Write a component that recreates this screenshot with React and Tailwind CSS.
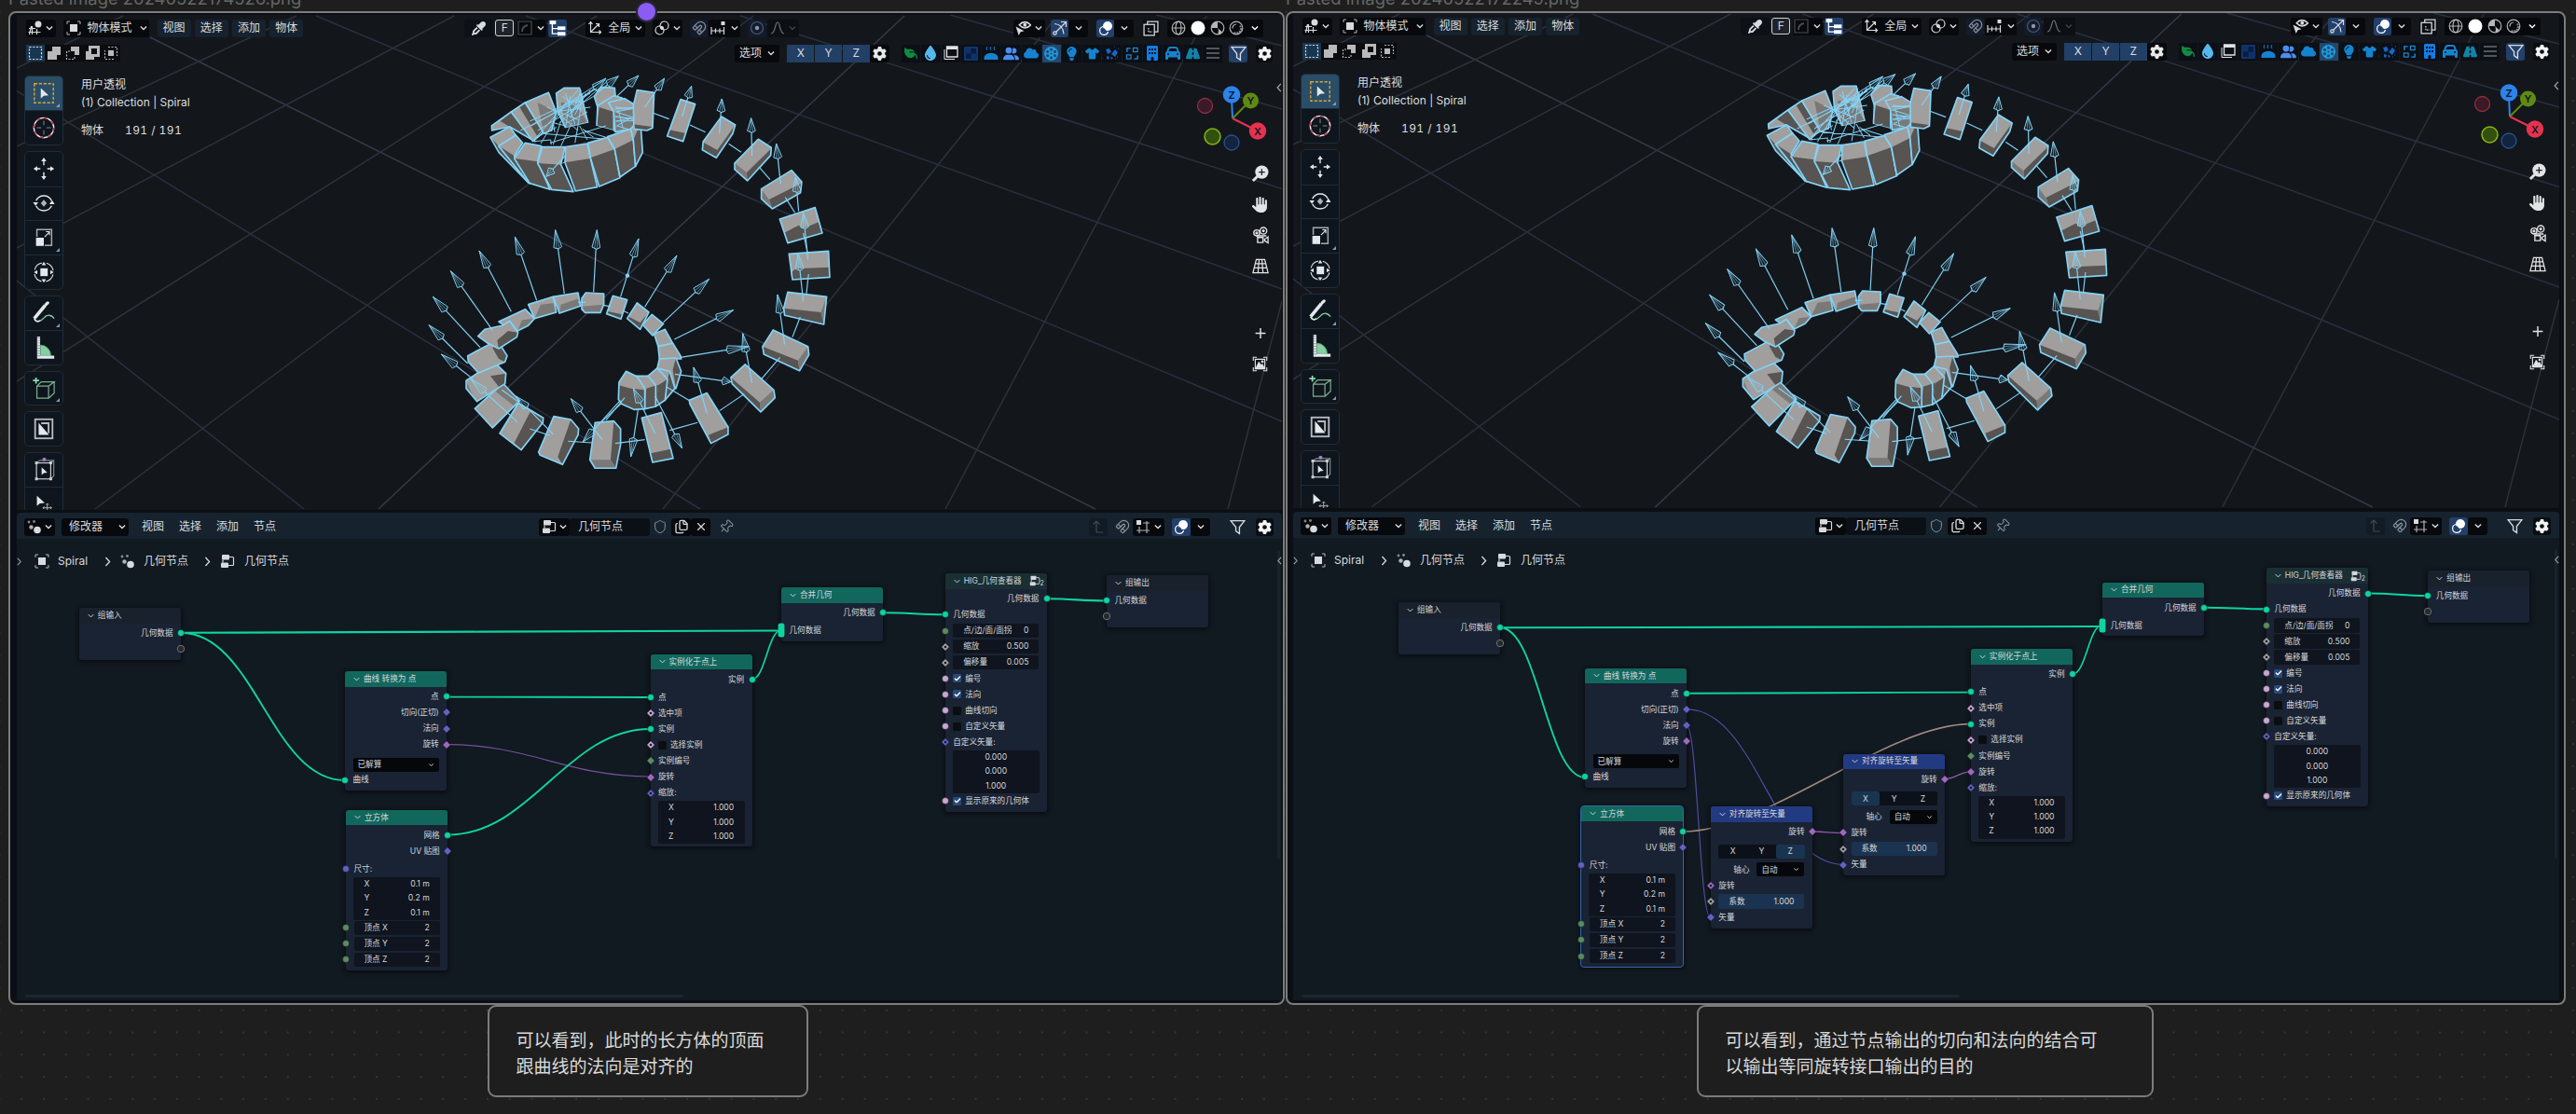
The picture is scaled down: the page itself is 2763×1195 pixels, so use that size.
import React from "react";
import { Magnet, Shield, X, Pin, Files, Check } from "lucide-react";
import {
  FaLeaf, FaDroplet, FaLightbulb, FaShirt, FaCar, FaRoad, FaBuilding,
  FaGear, FaHand, FaCloud, FaUserGroup, FaEyeDropper,
} from "react-icons/fa6";

/* ---------- small icons, drawn on a 16 unit grid ---------- */
function Ico({ children, className = "size-4" }) {
  return (
    <svg viewBox="0 0 16 16" fill="none" stroke="currentColor" strokeWidth="1.2" className={"shrink-0 " + className}>
      {children}
    </svg>
  );
}
const Chev = ({ className = "size-2.5", sw = 2.2 }) => (
  <Ico className={className}><path d="M3 5.5l5 5 5-5" strokeWidth={sw} /></Ico>
);
const ChevRight = ({ className = "size-2.5" }) => (
  <Ico className={className}><path d="M5 1.5l6 6.500-6 6.500" strokeWidth="1.900" /></Ico>
);
const ChevLeft = ({ className = "size-2.5" }) => (
  <Ico className={className}><path d="M11 1.5l-6 6.500 6 6.500" strokeWidth="1.900" /></Ico>
);
const ViewportType = () => (
  <Ico><path d="M4.500 6v9M9.500 9v6M1 8.500h7M0.500 12.500h13M1.500 15l2-9" /><circle cx="11" cy="4" r="3.500" fill="currentColor" stroke="none" /></Ico>
);
const ObjectMode = () => (
  <Ico><rect x="4" y="4" width="8" height="8" fill="currentColor" stroke="none" /><path d="M1 4V1h3M12 1h3v3M15 12v3h-3M4 15H1v-3" strokeWidth="1" opacity=".8" /></Ico>
);
const Particles = () => (
  <Ico><circle cx="11" cy="11.500" r="3.800" fill="currentColor" stroke="none" /><circle cx="4.500" cy="8.500" r="2.200" fill="currentColor" stroke="none" opacity=".8" /><circle cx="2" cy="3" r="1.400" fill="currentColor" stroke="none" opacity=".6" /><circle cx="7.500" cy="2.500" r="1.400" fill="currentColor" stroke="none" opacity=".6" /></Ico>
);
const NodeTree = ({ className = "size-4" }) => (
  <Ico className={className}><rect x="2" y="1" width="8" height="5.500" rx="1" fill="currentColor" stroke="none" /><rect x="1" y="9.500" width="8" height="5.500" rx="1" fill="currentColor" stroke="none" /><path d="M10 3.500h3.500q1 0 1 1v7q0 1-1 1H9M3 6.500v3" /></Ico>
);
const Axes = () => (
  <Ico><path d="M3.500 2v10.500H14M3.500 12.500L12 4M1.500 4l2-2.500 2 2.500M12.500 10.500l2 2-2 2M9 3.500h3.500V7" /></Ico>
);
const LinkPivot = () => (
  <Ico><circle cx="5.500" cy="10.500" r="4.500" /><circle cx="10.500" cy="5.500" r="4.500" /><circle cx="8" cy="8" r="1.300" fill="currentColor" /></Ico>
);
const SnapInc = () => (
  <Ico className="h-4 w-[16px]"><path d="M1 7v8M5.500 8.500v5M10 8.500v5M14.500 7v8M1 11h13.500" /><rect x="11.500" y="1" width="4" height="4" fill="currentColor" stroke="none" /></Ico>
);
const SnapGrid = () => (
  <Ico><rect x="1" y="1" width="5" height="5" fill="currentColor" stroke="none" /><path d="M4 8v7M12 2v13M8 4h7M1 12h14" opacity=".8" /></Ico>
);
const Dot = () => (
  <Ico><circle cx="8" cy="8" r="6.500" opacity=".5" /><circle cx="8" cy="8" r="2.200" fill="currentColor" stroke="none" /></Ico>
);
const Falloff = () => <Ico><path d="M1 14C6 14 5 2 8 2s2 12 7 12" /></Ico>;
const TreeList = () => (
  <Ico className="size-[18px]"><path d="M3 4v9.500h5M3 8.500h5" /><rect x="0.500" y="1" width="6" height="3.500" fill="currentColor" stroke="none" /><rect x="8" y="6.500" width="7.500" height="3.500" fill="currentColor" stroke="none" /><rect x="8" y="11.800" width="7.500" height="3.500" fill="currentColor" stroke="none" /></Ico>
);
const EyeCursor = () => (
  <Ico className="size-[17px]"><path d="M4 4.500Q9.500-1.500 15.500 4.500 9.500 10.500 4 4.500z" strokeWidth="1.500" /><circle cx="9.700" cy="4.500" r="1.800" fill="currentColor" stroke="none" /><path d="M0.500 6l8.500 4.500-3.700 1L3.500 15z" fill="currentColor" stroke="none" /></Ico>
);
const GizmoIcon = () => (
  <Ico><path d="M2.500 13.500L14 2M9 1.500h5.500V7M2 3.500Q11 4 12 14.500" /><circle cx="2.500" cy="13.500" r="1.700" fill="#22406b" /></Ico>
);
const OverlayIcon = () => (
  <Ico><circle cx="10" cy="6" r="5" fill="currentColor" stroke="none" /><path d="M5 6.500A4.500 4.500 0 1 0 10.500 12" /><path d="M6 8.500A3 3 0 0 0 8 10.500" stroke="#22406b" /></Ico>
);
const XrayIcon = () => (
  <Ico className="size-[17px]"><rect x="1" y="4" width="10.500" height="11" /><path d="M4.500 4V1H15v10.500h-3.500" /><path d="M5.500 7.500v4h4" strokeDasharray="1.500 1" /></Ico>
);
const WireIcon = () => <Ico><circle cx="8" cy="8" r="6.800" /><ellipse cx="8" cy="8" rx="3" ry="6.800" /><path d="M1.200 8h13.600" /></Ico>;
const SolidIcon = () => <Ico><circle cx="8" cy="8" r="7.500" fill="#fff" stroke="none" /></Ico>;
const MatIcon = () => <Ico><circle cx="8" cy="8" r="6.800" /><path d="M8 1.200V8L13 12.500A6.800 6.800 0 0 1 8 14.800 7 7 0 0 0 8 8H1.200A6.800 6.800 0 0 1 8 1.200z" fill="currentColor" stroke="none" /></Ico>;
const RendIcon = () => <Ico><circle cx="8" cy="8" r="6.800" /><path d="M12 5.500A5 5 0 0 1 5 12.500" strokeWidth="2" strokeDasharray="2 .8" opacity=".7" /><path d="M4 8.500A4 4 0 0 1 8 4" /></Ico>;
const FilterIcon = () => <Ico className="size-[17px]"><path d="M1 1.500h14L9.800 8v6.500L6.200 12V8z" strokeWidth="1.300" /></Ico>;
const MenuIcon = () => <Ico className="size-4 text-[#9a9da1]"><path d="M1 3h14M1 8h14M1 13h14" strokeWidth="1.200" /></Ico>;
const UpArrow = () => <Ico><path d="M6 14V2M2.500 5.500L6 2l3.500 3.500M6 14h7" /></Ico>;

/* asset filters */
const WindowIcon = () => <Ico className="size-4 text-[#e3e3e3]"><path d="M3.500 1h11.500v11H3.500z" strokeWidth="1.300" /><path d="M3.500 2.500H15" strokeWidth="3" /><path d="M1 4v10.500h11" strokeWidth="1" /></Ico>;
const CheckerIcon = () => <Ico className="size-[15px] text-[#1450a0]"><rect x="1" y="1" width="14" height="14" fill="#0b1c3d" /><rect x="1.500" y="1.500" width="6.500" height="6.500" fill="#0d3168" stroke="none" /><rect x="8" y="8" width="6.500" height="6.500" fill="#0d3168" stroke="none" /></Ico>;
const BowlIcon = () => <Ico className="size-4 text-[#1583cf]"><path d="M.500 15v-2A7 5 0 0 1 15.500 13v2z" fill="currentColor" stroke="none" /><path d="M4 1l-1 2 1 2M8 1L7 3l1 2M12 1l-1 2 1 2" strokeWidth="1" /></Ico>;
const ReelIcon = () => (
  <Ico className="size-[17px] text-[#1e9be0]"><circle cx="8" cy="8" r="7" fill="currentColor" stroke="none" />
    {[[8, 3.800], [8, 12.200], [4.300, 6], [11.700, 6], [4.300, 10], [11.700, 10]].map(([x, y], i) => <circle key={i} cx={x} cy={y} r="1.500" fill="#234a70" stroke="none" />)}
    <circle cx="8" cy="8" r="1" fill="#234a70" stroke="none" /></Ico>
);
const ShardIcon = () => <Ico className="size-4 text-[#1866c4]"><path d="M1 4l4-1 2 4-4 2zM7 9l4-5 3 3-3 5zM2 11l3 1-1 3-2-1zM6 12l3 1-2 2z" fill="currentColor" stroke="none" /><path d="M10 1h1M14 3h1M13 12h1M11 14h1" strokeWidth="1.500" opacity=".6" /></Ico>;
const SwapIcon = () => <Ico className="size-[15px] text-[#1d92d8]"><rect x="9" y="1.500" width="5" height="4.500" /><rect x="1.500" y="9.500" width="5" height="4.500" /><path d="M6 2H2v4M10 14h4v-4" strokeWidth="1.500" /></Ico>;

const ASSETS = [
  <FaLeaf className="size-3.5 -scale-x-100 text-[#128a41]" />,
  <FaDroplet className="size-4 text-[#57b7ec]" />,
  <WindowIcon />,
  <CheckerIcon />,
  <BowlIcon />,
  <FaUserGroup className="size-[17px] text-[#4c8df0]" />,
  <FaCloud className="size-4 text-[#1583cf]" />,
  <ReelIcon />,
  <FaLightbulb className="size-[15px] text-[#1583cf]" />,
  <FaShirt className="size-[15px] text-[#1583cf]" />,
  <ShardIcon />,
  <SwapIcon />,
  <FaBuilding className="size-4 text-[#127ce6]" />,
  <FaCar className="size-4 text-[#1583cf]" />,
  <FaRoad className="size-[15px] text-[#1283a8]" />,
  <MenuIcon />,
];

/* ---------- toolbar tools ---------- */
const W = "#e4e8ec";
const TOOLS = [
  [
    <g><rect x="3" y="3" width="22" height="22" stroke="#d9a53a" strokeWidth="1.500" strokeDasharray="3.500 1.800" /><path d="M10.500 8v12l3.500-3 5.500-.5z" fill={W} stroke="none" /></g>,
    <g><circle cx="14" cy="14" r="11.500" stroke={W} strokeWidth="1.500" /><circle cx="14" cy="14" r="11.500" stroke="#c7364f" strokeWidth="1.500" strokeDasharray="4.500 4.500" /><path d="M14 6v5M14 17v5M6 14h5M17 14h5" stroke="#8b9095" /></g>,
  ],
  [
    <g fill={W} stroke={W}><path d="M14 1l3 4.500h-6zM14 27l3-4.500h-6zM2 14l4.500-3v6zM26 14l-4.500-3v6z" stroke="none" /><path d="M14 5v5M14 18v5M6 14h4M18 14h5" strokeWidth="1.500" /></g>,
    <g stroke={W} strokeWidth="1.500"><path d="M5 11a10 10 0 0 1 18 0M5 17a10 10 0 0 0 18 0" /><path d="M1.500 13h6L4.500 17zM20.500 15h6l-3-4.500z" fill={W} stroke="none" /><path d="M14 10l3.500 4-3.500 4-3.500-4z" fill="#aeb4b9" stroke="none" /></g>,
    <g stroke={W} strokeWidth="1.200"><path d="M6 13V4.500h17V23h-8" stroke="#a4abb2" strokeWidth="1.600" /><rect x="5" y="14" width="9" height="9.500" fill={W} stroke="none" /><path d="M15 13l5.500-5.500M16.500 7h4v4" /></g>,
    <g stroke={W}><circle cx="14" cy="14" r="11" strokeWidth="1.200" strokeDasharray="12 5.280" strokeDashoffset="-2.700" /><rect x="10" y="9.500" width="8.500" height="9" fill={W} stroke="none" /><path d="M14 2l2.500 4h-5zM14 26l2.500-4h-5zM2.500 14l4-2.500v5zM25.500 14l-4-2.500v5z" fill={W} stroke="none" /></g>,
  ],
  [
    <g><path d="M3 20L15.500 5" stroke={W} strokeWidth="4" /><path d="M16.500 4l2-2" stroke={W} strokeWidth="3.500" strokeLinecap="round" /><path d="M3 20c2 6 8 3 11-.5 4-5 9-3.500 12 .5" stroke="#7fcf9f" strokeWidth="1.500" /><path d="M3 20c1 4 4 4 7 2.500" stroke={W} strokeWidth="1.500" /></g>,
    <g><path d="M10 23V11a12 12 0 0 1 12 12z" fill="#86cfa3" stroke="#5fa57c" /><path d="M8 1v24h18" stroke={W} strokeWidth="3.500" /><path d="M8 2v22" stroke="#8d9298" strokeWidth="3.500" strokeDasharray="1 2" /></g>,
  ],
  [
    <g stroke="#7dae92" strokeWidth="1.300"><path d="M6 11h13.500v14H6zM6 11l5-5h15l-6.500 5M26 6v13l-6.500 6" /><path d="M5 1v7M1.500 4.500h7" stroke="#8be0b0" strokeWidth="1.800" /></g>,
  ],
  [
    <g><rect x="4" y="3" width="20" height="22" stroke="#b5babf" strokeWidth="2" /><path d="M8 7v14h12z" fill={W} stroke="none" /><path d="M11 7.500h8.500V19" stroke="#b5babf" strokeWidth="2" /></g>,
  ],
  [
    <g stroke="#c7ccd1" strokeWidth="1.300"><rect x="5.500" y="6" width="16.500" height="18.500" /><path d="M5.500 6l4-3h16v18l-3.500 3.500M25.500 3L22 6" stroke="#7f858b" /><circle cx="14.500" cy="2" r="2.200" fill="#a07fc4" stroke="none" /><path d="M11.500 11v9l2.500-2.300 4-.4z" fill={W} stroke="none" /><path d="M4.500 5h2v2h-2zM21 5h2v2h-2zM4.500 23.500h2v2h-2zM21 23.500h2v2h-2z" fill={W} /></g>,
    <g stroke="#b9bec3"><path d="M6 4v12l3.500-3 5.500-.5z" fill={W} stroke="none" /><path d="M18 13v10M13 18h10M16.500 14.500L18 13l1.500 1.500M14.500 16.500L13 18l1.500 1.500M21.500 16.500L23 18l-1.500 1.500" /></g>,
  ],
];
const CORNERS = { "0-0": 1, "1-2": 1, "2-0": 1, "3-0": 1 };

function Toolbar() {
  return (
    <div className="flex w-[42px] flex-col gap-[6px]">
      {TOOLS.map((group, gi) => (
        <div key={gi} className="flex flex-col overflow-hidden rounded-[5px] border border-[#1e2c39] bg-[#0e151d]">
          {group.map((g, i) => (
            <div key={i} className={"relative flex items-center justify-center " + (group.length === 1 ? "h-[35.300px] " : "h-[36.700px] ") + (gi === 0 && i === 0 ? "bg-[#2a4d68]" : i > 0 ? "border-t border-[#1e2c39]" : "")}>
              <svg viewBox="0 0 28 28" fill="none" className="size-[26px]">{g}</svg>
              {CORNERS[gi + "-" + i] && <span className="absolute right-[3px] bottom-[3px] border-2 border-t-transparent border-r-[#8b98a3] border-b-[#8b98a3] border-l-transparent" />}
            </div>
          ))}
        </div>
      ))}
    </div>
  );
}

/* ---------- 3D scene ---------- */
const GRID = [
  [161, 40, 1175, 546, 1], [18, 97.600, 751, 546], [18, 301, 326, 546], [339, 17, 1375, 452], [564, 17, 1375, 310],
  [794, 17, 1375, 202.500], [1019, 16, 1375, 117], [1240, 16, 1375, 49],
  [970, 17, 406, 546, 1], [1130, 22, 711, 546], [1294, 17, 1014, 546], [1375, 323, 1317, 546], [808, 17, 102, 546],
  [640, 17, 18, 409], [487, 17, 18, 266], [318, 17, 18, 157], [132, 17, 18, 73],
];
/* each block: outline, light face, dark face, mid face */
const BLOCKS = [
  ["790,110 845,118 840,232 822,240 780,235 778,160", "", "778,220 838,228 822,240 780,235"],
  ["930,140 977,155 938,275 887,258", "", "893,238 945,248 938,275 887,258"],
  ["1062,195 1106,222 1098,250 1045,328 1000,302 1003,275", "", "1003,278 1048,303 1106,222 1098,250 1045,328 1000,302"],
  ["1180,268 1222,295 1220,320 1145,402 1104,365 1104,345", "", "1143,375 1222,298 1220,320 1145,402", "1104,345 1143,375 1145,402 1104,365"],
  ["1287,368 1320,405 1316,440 1225,492 1190,460 1190,428", "", "1215,462 1318,410 1316,440 1225,492", "1190,430 1215,462 1225,492 1190,460"],
  ["1363,488 1386,570 1275,602 1249,525", "", "1262,570 1310,545 1325,555 1378,533 1386,570 1275,602"],
  ["1279,637 1406,628 1410,712 1290,720", "", "1284,700 1300,685 1408,680 1410,712 1290,720"],
  ["1275,760 1400,775 1391,864 1265,835 1262,812", "", "1262,812 1382,825 1391,864 1265,835", "1400,775 1391,864 1382,825"],
  ["1228,882 1340,935 1343,962 1313,1013 1198,960 1194,935", "", "1194,935 1308,980 1313,1013 1198,960", "1340,935 1343,962 1313,1013 1308,980"],
  ["1138,993 1230,1075 1234,1100 1188,1146 1096,1055 1092,1035", "", "1092,1035 1185,1115 1188,1146 1096,1055", "1230,1075 1234,1100 1188,1146 1185,1115"],
  ["1015,1085 1083,1195 1083,1218 1028,1247 960,1120 958,1108", "", "1020,1220 1083,1195 1083,1218 1028,1247"],
  ["868,1148 906,1295 840,1308 805,1165", "", "830,1280 902,1265 906,1295 840,1308"],
  ["655,1180 715,1175 737,1200 737,1250 722,1327 655,1327 638,1300", "", "715,1175 737,1200 737,1250 722,1327 705,1300", "642,1300 705,1300 722,1327 655,1327"],
  ["522,1160 577,1170 602,1200 600,1220 550,1315 478,1285 473,1275", "", "577,1170 602,1200 600,1220 550,1315 535,1290"],
  ["408,1117 488,1165 487,1180 417,1268 348,1215", "", "450,1138 488,1165 487,1180 417,1268 395,1245"],
  ["358,1053 412,1110 325,1197 268,1135", "", "", "335,1080 358,1053 412,1110 395,1127"],
  ["330,985 368,1022 365,1055 275,1112 240,1070 240,1045", "", "318,1030 368,1022 365,1055 345,1065", "240,1045 255,1080 275,1112 240,1070"],
  ["340,915 372,965 365,985 280,1020 247,985 245,965", "", "340,915 372,965 365,985 345,975 325,940"],
  ["278,902 300,880 355,868 380,853 407,890 403,905 345,942 310,925", "", "375,885 407,890 403,905 345,942 340,915"],
  ["345,855 430,815 460,845 440,868 405,885 380,853 360,866", "", "", "420,850 460,845 440,868 405,885"],
  ["440,800 520,775 530,825 460,845", "", "", "480,800 525,795 530,825 460,845"],
  ["520,775 600,762 608,805 540,828", "", "", "545,800 604,780 608,805 540,828"],
  ["625,762 683,765 683,800 672,826 622,826 612,815 612,780", "", "", "614,806 683,800 672,826 622,826"],
  ["712,772 758,785 738,847 692,830", "", "696,822 742,832 738,847 692,830"],
  ["790,795 828,825 800,880 758,845", "", "760,838 800,858 828,825 800,880 758,845"],
  ["838,832 875,862 840,900 808,865"],
  ["845,895 880,880 905,925 858,935"],
  ["858,935 905,925 930,965 932,975 862,975"],
  ["862,975 915,972 932,1015 915,1070 855,1005", "", "915,972 932,1015 915,1070 905,1010"],
  ["855,1005 895,1015 912,1070 880,1108 850,1025", "", "895,1015 912,1070 880,1108 888,1040"],
  ["825,1030 855,1005 888,1040 880,1108 850,1128", "", "858,1060 888,1040 880,1108 850,1128"],
  ["780,1030 825,1030 850,1060 850,1128 815,1136 812,1070", "", "820,1070 858,1058 850,1128 815,1136"],
  ["755,1015 790,1032 815,1070 815,1136 780,1138 740,1120 730,1105 732,1050", "", "732,1060 770,1070 815,1075 815,1136 780,1138 740,1120 730,1105"],
];
const BACK = [
  ["323,240 322,225 385,180 462,275 380,228", "", "350,210 385,180 462,275 400,240"],
  ["385,180 430,150 490,245 455,275", "", "412,165 430,150 490,245 470,260"],
  ["430,150 505,118 530,180 515,240 490,250", "", "", "470,150 530,180 515,240 490,250"],
  ["530,120 555,103 605,103 632,215 560,232 535,180", "", "", "545,150 590,150 632,215 560,232"],
  ["652,130 675,100 718,103 722,150 663,165"],
  ["663,160 715,128 742,135 715,180 715,240 660,225", "", "668,165 715,180 715,240 660,225"],
  ["698,150 750,137 795,165 802,200 770,235 720,245 715,180", "", "", "715,180 790,170 802,200 770,235 720,245"],
];
const FRONT = [
  ["318,262 380,228 400,255 345,290 440,408 345,310", "", "318,262 345,290 440,408 345,310"],
  ["345,290 400,255 422,280 395,322 445,410 440,408", "", "345,290 395,322 445,410 440,408"],
  ["395,330 430,280 482,290 470,340 510,430 445,410", "", "395,330 470,340 510,430 445,410"],
  ["470,345 485,293 558,293 545,350 585,437 515,430", "", "470,345 545,350 585,437 515,430"],
  ["558,343 560,293 630,282 640,330 662,422 592,435", "", "558,343 640,330 662,422 592,435"],
  ["640,328 632,280 695,262 718,300 735,392 668,420", "", "640,328 718,300 735,392 668,420"],
  ["718,300 695,260 770,235 778,270 785,355 735,390", "", "718,300 778,270 785,355 735,390"],
  ["778,270 770,235 800,200 808,310 785,355", "", "778,270 800,220 808,310 785,355"],
];
const ARROWS = [
  [325, 883, 190, 692], [285, 938, 133, 775], [245, 990, 120, 866], [262, 1040, 160, 960], [385, 823, 282, 627],
  [467, 787, 397, 582], [556, 765, 527, 560], [650, 760, 661, 560], [737, 775, 795, 588], [815, 808, 918, 642],
  [875, 857, 1022, 718], [910, 912, 1100, 818], [930, 970, 1150, 935, 72], [912, 1024, 1092, 1049, 28],
  [1160, 322, 1157, 200, 45], [1252, 412, 1238, 282, 48], [1055, 250, 1063, 138, 42], [935, 195, 965, 97, 38],
  [815, 165, 878, 72, 42], [725, 130, 795, 63, 44], [660, 120, 730, 65, 44], [600, 150, 690, 72, 50],
  [1310, 500, 1300, 390, 48], [1340, 655, 1325, 505, 50], [1325, 790, 1308, 635, 54], [1265, 928, 1242, 768],
  [1160, 1052, 1130, 893], [1015, 1150, 972, 1002, 50], [848, 1215, 778, 1070, 50], [520, 1218, 400, 1095, 50],
  [405, 1178, 255, 1040], [678, 1235, 577, 1103, 50], [735, 1110, 615, 1243, 50], [793, 1140, 770, 1290],
  [848, 1095, 935, 1263, 50], [560, 320, 498, 388, 30],
];
const JOINS = [
  [840, 183, 893, 203], [960, 222, 1010, 245], [1085, 283, 1125, 310], [1182, 357, 1218, 398], [1267, 455, 1298, 505],
  [1325, 570, 1340, 640], [1342, 702, 1335, 765], [1315, 840, 1290, 905], [1250, 970, 1190, 1040], [1135, 1088, 1055, 1142],
  [985, 1180, 895, 1205], [815, 1235, 720, 1247], [645, 1245, 568, 1240], [510, 1222, 445, 1200], [885, 1065, 960, 1110],
  [683, 803, 705, 806], [745, 820, 762, 828], [600, 793, 625, 793], [750, 1100, 690, 1172], [740, 1118, 675, 1178],
  [355, 1075, 410, 1115],
];
const TANGLE =
  "M445 210L640 120M450 225L660 105M470 240L650 130M415 240L610 140M500 165L600 205M460 268L600 110M480 282L560 150M520 180L640 165M535 185L600 240M560 120L590 220M575 130L560 230M610 110L575 200M625 120L590 190M540 215L690 85M555 160L680 80M600 225L615 120M520 285L545 210M545 290L580 215M590 280L600 225M630 270L605 225M650 262L615 235M690 262L620 240M510 280L690 225M470 260L530 230M460 275L512 270L514 285M490 250L690 268M525 245L520 215L560 225M565 215L630 180M550 130L610 175M570 190L640 110M720 170L795 165L722 180L800 205L720 195L798 208L722 210L770 200L725 225L760 235M730 175L745 235M720 165L770 170M550 345L565 340M480 360L495 365";

function Block({ d }) {
  return (
    <g>
      <polygon points={d[0]} fill="#a09f9e" />
      {d[2] && <polygon points={d[2]} fill="#575452" />}
      {d[3] && <polygon points={d[3]} fill="#7b7977" />}
      <polygon points={d[0]} fill="none" stroke="#82d3f6" strokeWidth="5" strokeLinejoin="round" />
    </g>
  );
}
function Arrow({ a }) {
  const [x1, y1, x2, y2, len = 60] = a;
  const l = Math.hypot(x2 - x1, y2 - y1);
  const ux = (x2 - x1) / l, uy = (y2 - y1) / l;
  const bx = x2 - ux * len, by = y2 - uy * len;
  const w = 13, px = -uy, py = ux;
  const f = (k, m) => `${bx + px * w * k + ux * m},${by + py * w * k + uy * m}`;
  return (
    <g fill="none" stroke="#82d3f6" strokeLinejoin="round">
      <path d={`M${x1},${y1}L${bx},${by}`} strokeWidth="3.500" />
      <path d={`M${x2},${y2}L${f(1, 4)}L${f(0.150, -2)}L${f(-1, 4)}Z`} strokeWidth="3" />
      <path d={`M${x2},${y2}L${f(0.350, 0)}M${x2},${y2}L${f(-0.350, 0)}`} strokeWidth="1.800" />
    </g>
  );
}
function Scene() {
  return (
    <svg viewBox="18 16 1357 531" preserveAspectRatio="none" className="absolute inset-0 size-full">
      {GRID.map(([a, b, c, d, hi], i) => (
        <line key={i} x1={a} y1={b} x2={c} y2={d} stroke={hi ? "#343948" : i < 8 ? "#29303f" : "#2d3139"} strokeWidth="1.500" />
      ))}
      <g transform="translate(420 60) scale(.3333)">
        {BACK.map((d, i) => <Block key={i} d={d} />)}
        <polygon points="462,275 490,250 560,232 632,215 660,225 715,240 690,262 560,290 482,288" fill="#14181d" />
        <path d={TANGLE} fill="none" stroke="#82d3f6" strokeWidth="3" />
        {FRONT.map((d, i) => <Block key={i} d={d} />)}
        {BLOCKS.map((d, i) => <Block key={i} d={d} />)}
        {JOINS.map(([a, b, c, d], i) => <line key={i} x1={a} y1={b} x2={c} y2={d} stroke="#82d3f6" strokeWidth="3.500" />)}
        {ARROWS.map((a, i) => <Arrow key={i} a={a} />)}
        <circle cx="759" cy="707" r="6.500" fill="#82d3f6" />
      </g>
    </svg>
  );
}

function AxisGizmo() {
  return (
    <svg viewBox="1280 88 80 76" className="h-[76px] w-[80px]">
      <g strokeWidth="2">
        <line x1="1322" y1="126" x2="1321" y2="104" stroke="#2c84ea" />
        <line x1="1322" y1="126" x2="1339" y2="109" stroke="#5f8a12" />
        <line x1="1322" y1="126" x2="1346" y2="138" stroke="#e6324f" />
      </g>
      <circle cx="1292.500" cy="112.500" r="8" fill="#3a1a26" stroke="#8f2d44" strokeWidth="1.300" />
      <circle cx="1300.500" cy="145.500" r="8.500" fill="#33500f" stroke="#86b70f" strokeWidth="1.500" />
      <circle cx="1321" cy="152" r="8" fill="#14243f" stroke="#265291" strokeWidth="1.300" />
      <circle cx="1321" cy="100.500" r="9.300" fill="#2c84ea" />
      <circle cx="1341.500" cy="107" r="8.500" fill="#5f8a12" />
      <circle cx="1349" cy="139.500" r="9.200" fill="#e6324f" />
      <g fontFamily="Inter" fontSize="11" fontWeight="600" textAnchor="middle" fill="#0d1626">
        <text x="1321" y="104.500">Z</text><text x="1341.500" y="111">Y</text><text x="1349" y="143.500">X</text>
      </g>
    </svg>
  );
}

function NavIcons() {
  return (
    <div className="flex flex-col items-center text-[#e2e4e6]">
      <svg viewBox="0 0 20 20" className="h-[33px] w-[19px]"><circle cx="12" cy="8" r="7.500" fill="currentColor" /><path d="M7 13l-5 5" stroke="currentColor" strokeWidth="3" /><path d="M12 4.500v7M8.500 8h7" stroke="#1a1d22" strokeWidth="1.300" /></svg>
      <div className="flex h-[33px] items-center"><FaHand className="size-[17px]" /></div>
      <svg viewBox="0 0 20 20" fill="none" stroke="currentColor" strokeWidth="1.500" className="h-[33px] w-[18px]"><circle cx="5.500" cy="7" r="3.500" /><circle cx="13.500" cy="4.500" r="4" /><path d="M5 10.500h12M6.500 12.500h6.500v6H6.500zM19 12v7l-4-2.500v-2z" /><circle cx="13.500" cy="4.500" r="1" /><circle cx="5.500" cy="7" r="1" /></svg>
      <svg viewBox="0 0 20 20" fill="none" stroke="currentColor" strokeWidth="1.400" className="h-[33px] w-[18px]"><path d="M5 2h10l4 16H1zM3.800 7h12.400M2.500 12h15M8.300 2L7 18M11.700 2L13 18" /></svg>
      <svg viewBox="0 0 20 20" stroke="currentColor" strokeWidth="1.600" className="mt-[39px] h-[33px] w-[18px]"><path d="M10 4v12M4 10h12" /></svg>
      <svg viewBox="0 0 20 20" fill="none" stroke="currentColor" strokeWidth="1.300" className="h-[33px] w-[17px]"><path d="M1.500 6V1.500H6M14 1.500h4.500V6M18.500 14v4.500H14M6 18.500H1.500V14M4 4h12v12H4z" /><path d="M5 15l3.500-7 3 4 1.500-1.500 2 4.500z" fill="currentColor" /><circle cx="13" cy="7" r="1" fill="currentColor" /></svg>
    </div>
  );
}

/* ---------- 3D viewport ---------- */
const Btn = ({ w = "", c = "bg-[#07090c]", j = "justify-center", children }) => (
  <div className={"flex h-[19px] shrink-0 items-center rounded-[3px] whitespace-nowrap " + j + " " + w + " " + c}>{children}</div>
);

const SELECT_MODES = [
  <rect x="1.500" y="1.500" width="13" height="13" strokeDasharray="2.200 1.500" />,
  <path d="M6 1h9v9h-4v5H1V6h5z" fill="currentColor" stroke="none" />,
  <g><path d="M6 1h9v9h-5V6H6z" fill="currentColor" stroke="none" /><path d="M5 6H1.500v8.500H10V11" strokeDasharray="2 1.500" /></g>,
  <g><path d="M5.500 1.500h9v9h-9z" strokeWidth="3" /><path d="M1 6h4v5h5v4H1z" fill="currentColor" stroke="none" /></g>,
  <g><rect x="5" y="5" width="6" height="6" fill="currentColor" stroke="none" /><path d="M5 1.500h9.500V11M11 14.500H1.500V5" strokeDasharray="2 1.500" /></g>,
];

function Viewport() {
  return (
    <div className="relative h-[531px] shrink-0 overflow-hidden bg-[#13171c]">
      <Scene />
      <div className="relative flex h-full flex-col">
        <div className="mt-[4px] flex h-[20px] shrink-0 items-center pr-[20px] pl-[9.500px] text-[12px] text-[#d8dbde]">
          <Btn w="w-[32px] gap-[2px]"><ViewportType /><Chev /></Btn>
          <Btn w="ml-[8px] w-[92px] pr-[1px] pl-[3px]" j="justify-between"><ObjectMode /><span className="ml-[7px]">物体模式</span><Chev className="ml-auto size-2.5" /></Btn>
          <div className="ml-[9px] flex gap-[4px]">
            {["视图", "选择", "添加", "物体"].map((t) => <Btn key={t} w="w-[36.200px]" c="bg-[#16222e]">{t}</Btn>)}
          </div>
          <div className="ml-[173px] flex items-center">
            <Btn w="w-[31px]" c="bg-[#0c1017]"><FaEyeDropper className="size-[15px]" /></Btn>
            <div className="ml-[2px] flex h-[18px] w-[20px] items-center justify-center rounded-[3px] border-[1.500px] border-[#cfd2d5] bg-[#20242a] text-[12px] leading-none">F</div>
            <Btn w="ml-[3px] w-[32px] gap-[4px]"><Ico className="size-[16px] text-[#4a4e53]"><path d="M1 1h14v14H1z" /><path d="M5 12q0-6 6-7" strokeWidth="1.800" /></Ico><Chev /></Btn>
            <Btn w="ml-[2px] w-[20px]" c="bg-[#22406b] text-white"><TreeList /></Btn>
            <Btn w="ml-[20px] w-[64px] gap-[6px]"><Axes /><span>全局</span><Chev className="-ml-[2px] size-2.5" /></Btn>
            <Btn w="ml-[8px] w-[32px] gap-[3px]"><LinkPivot /><Chev /></Btn>
            <Btn w="ml-[8px] w-[19px] text-[#858b94]" c="bg-[#121c2e]"><Magnet className="size-[16px]" /></Btn>
            <Btn w="ml-[1px] w-[34px] gap-[5px]"><SnapInc /><Chev /></Btn>
            <Btn w="ml-[8px] w-[19px] text-[#8a96ad]" c="bg-[#121c2e]"><Dot /></Btn>
            <Btn w="ml-[2px] w-[34px] gap-[3px] text-[#70757b]" c="bg-[#0c0f13]"><Falloff /><Chev className="size-2.5 opacity-50" /></Btn>
          </div>
          <div className="ml-auto flex items-center">
            <Btn w="w-[34px] gap-[3px]"><EyeCursor /><Chev /></Btn>
            <Btn w="ml-[6px] w-[19px]" c="bg-[#22406b]"><GizmoIcon /></Btn>
            <Btn w="w-[21px]"><Chev /></Btn>
            <Btn w="ml-[9px] w-[19px] text-white" c="bg-[#22406b]"><OverlayIcon /></Btn>
            <Btn w="w-[21px]"><Chev /></Btn>
            <Btn w="ml-[9px] w-[19px]" c="bg-[#0c0f13]"><XrayIcon /></Btn>
            <Btn w="ml-[8px] w-[103px] gap-[4.700px] text-[#b4b7ba]"><WireIcon /><SolidIcon /><MatIcon /><RendIcon /><Chev className="ml-[2px] size-2.5 text-white" /></Btn>
          </div>
        </div>

        <div className="mt-[7px] flex h-[20px] shrink-0 items-center pr-[10px] pl-[9.500px] text-[12px] text-[#d8dbde]">
          <div className="flex h-[18px] items-center bg-[#0a0c0f]">
            {SELECT_MODES.map((g, i) => (
              <div key={i} className={"flex h-[18px] w-[20.400px] items-center justify-center " + (i === 0 ? "bg-[#193650]" : "text-[#b9b9b9]")}>
                <Ico>{g}</Ico>
              </div>
            ))}
          </div>
          <div className="ml-auto flex items-center">
            <Btn w="w-[48px] gap-[5px]"><span>选项</span><Chev /></Btn>
            <div className="ml-[8px] flex gap-px">
              {["X", "Y", "Z"].map((t) => <div key={t} className="flex h-[19px] w-[28.700px] items-center justify-center bg-[#223f66]">{t}</div>)}
            </div>
            <Btn w="w-[21px]" c="bg-[#07090c] text-[#e6e8ea]"><FaGear className="size-[15px]" /></Btn>
            <div className="ml-[13px] flex gap-px">
              {ASSETS.map((g, i) => (
                <div key={i} className={"flex h-[19px] w-[20.600px] items-center justify-center " + (i === 7 ? "bg-[#24466b]" : "bg-[#0b0f16]")}>{g}</div>
              ))}
            </div>
            <Btn w="ml-[7px] w-[20px]" c="bg-[#22406b]"><FilterIcon /></Btn>
            <Btn w="ml-[9px] w-[18px]" c="bg-[#0a0d11] text-[#f2f3f4]"><FaGear className="size-[15px]" /></Btn>
          </div>
        </div>

        <div className="mt-[13.500px] flex pl-[8px]">
          <Toolbar />
          <div className="ml-[19px] flex flex-col text-[12px] leading-[19px] text-[#dcdedf]">
            <span>用户透视</span>
            <span>(1) Collection | Spiral</span>
            <span className="mt-[11px] flex"><span className="w-[47px]">物体</span><span className="tracking-[0.400px] tabular-nums">191 / 191</span></span>
          </div>
          <div className="mr-[15px] ml-auto flex flex-col items-end pt-[8px]">
            <AxisGizmo />
            <div className="mt-[5px] -mr-[1px]"><NavIcons /></div>
          </div>
        </div>
      </div>
      <div className="absolute top-[73px] right-[-2px] text-[#a8abae]"><ChevLeft /></div>
    </div>
  );
}

/* ---------- node editor ---------- */
const GREEN = "#0fd3a0", VEC = "#6461c4", ROT = "#a366bf", BOOL = "#cba6d3", INT = "#5b8c60", FLT = "#a1a1a1";

function Socket({ side, kind, color }) {
  const pos = side === "l" ? { left: -5 } : { right: -5 };
  return (
    <svg viewBox="0 0 10 10" className="absolute top-1/2 size-[10px] -translate-y-1/2 overflow-visible" style={pos}>
      {kind === "c" && <circle cx="5" cy="5" r="3.500" fill={color} stroke="#0b1016" strokeWidth=".5" />}
      {kind === "d" && <path d="M5 .8L9.200 5 5 9.200.8 5z" fill={color} stroke="#0b1016" strokeWidth=".4" />}
      {kind === "h" && <g><path d="M5 .8L9.200 5 5 9.200.8 5z" fill={color} stroke="#0b1016" strokeWidth=".4" /><circle cx="5" cy="5" r="1.300" fill="#151b26" /></g>}
      {kind === "e" && <circle cx="5" cy="5" r="3.700" fill="#242a2e" stroke="#6f7274" strokeWidth="1" />}
      {kind === "p" && <rect x="1.600" y="-2.500" width="6.800" height="15" rx="2.500" fill={color} />}
    </svg>
  );
}
const Box = ({ on }) => (
  <span className={"flex size-[9px] items-center justify-center rounded-[1.500px] " + (on ? "bg-[#274a7c]" : "bg-[#0b0d11]")}>
    {on && <Check className="size-[8px] text-white" strokeWidth={4} />}
  </span>
);
function Row({ r }) {
  const base = "relative flex h-[17.100px] shrink-0 items-center px-[8.500px] " + (r.gap ? "mt-[2px] " : "");
  const sock = r.s && <Socket side={r.t === "out" ? "r" : "l"} kind={r.s[0]} color={r.s[1]} />;
  switch (r.t) {
    case "out":
      return <div className={base + "justify-end"}>{r.l}{sock}</div>;
    case "in":
      return <div className={base}>{r.l}{sock}</div>;
    case "check":
      return <div className={base + "gap-[4px]"}><Box on={r.on} />{r.l}{sock}</div>;
    case "field":
      return (
        <div className={base}>
          <div className={"flex h-[15.400px] w-full items-center justify-between rounded-[2px] px-[11px] " + (r.blue ? "bg-[#1a3350]" : "bg-[#0f141e]")}><span>{r.l}</span><span>{r.v}</span></div>
          {sock}
        </div>
      );
    case "vec":
      return (
        <div className="mx-[8px] flex h-[46px] shrink-0 flex-col rounded-[2px] bg-[#0f141e]">
          {r.v.map(([a, b], i) => (
            <div key={i} className={"flex h-[15.300px] items-center px-[11.500px] " + (a ? "justify-between" : "justify-center")}>
              {a && <span>{a}</span>}<span>{b}</span>
            </div>
          ))}
        </div>
      );
    case "drop":
      return <div className="mx-[8.500px] mt-[5.500px] mb-[0.500px] flex h-[15px] shrink-0 items-center justify-between rounded-[2px] bg-[#05070b] px-[5px]"><span>{r.l}</span><Chev className="size-[7px]" /></div>;
    case "tabs":
      return (
        <div className="mx-[8.500px] mt-[5px] flex h-[15px] shrink-0 rounded-[2px] bg-[#0c1119]">
          {["X", "Y", "Z"].map((t) => <span key={t} className={"flex flex-1 items-center justify-center rounded-[2px] " + (t === r.v ? "bg-[#19344f]" : "")}>{t}</span>)}
        </div>
      );
    default:
      return (
        <div className="mx-[8.500px] mt-[3.500px] flex h-[17px] shrink-0 items-center justify-end gap-[8px]"><span>{r.l}</span>
          <div className="flex h-[15px] w-[51px] items-center justify-between rounded-[2px] bg-[#05070b] px-[5px]"><span>{r.v}</span><Chev className="size-[7px]" /></div>
        </div>
      );
  }
}

const HEADS = { geo: "bg-[#12675c]", plain: "bg-[#18212c]", group: "bg-[#1a2f33]", util: "bg-[#223a82]" };
const D = {
  input: { h: "plain", title: "组输入", rows: [{ t: "out", l: "几何数据", s: ["c", GREEN] }, { t: "out", l: "", s: ["e"] }] },
  output: { h: "plain", title: "组输出", rows: [{ t: "in", l: "几何数据", s: ["c", GREEN] }, { t: "in", l: "", s: ["e"] }] },
  curve: {
    h: "geo", title: "曲线 转换为 点", rows: [
      { t: "out", l: "点", s: ["c", GREEN] }, { t: "out", l: "切向(正切)", s: ["d", VEC] }, { t: "out", l: "法向", s: ["d", VEC] },
      { t: "out", l: "旋转", s: ["d", ROT] }, { t: "drop", l: "已解算" }, { t: "in", l: "曲线", s: ["c", GREEN] }],
  },
  cube: {
    h: "geo", title: "立方体", rows: [
      { t: "out", l: "网格", s: ["c", GREEN] }, { t: "out", l: "UV 贴图", s: ["d", VEC] }, { t: "in", gap: 1, l: "尺寸:", s: ["c", VEC] },
      { t: "vec", v: [["X", "0.1 m"], ["Y", "0.2 m"], ["Z", "0.1 m"]] },
      { t: "field", l: "顶点 X", v: "2", s: ["c", INT] }, { t: "field", l: "顶点 Y", v: "2", s: ["c", INT] }, { t: "field", l: "顶点 Z", v: "2", s: ["c", INT] }],
  },
  inst: {
    h: "geo", title: "实例化于点上", rows: [
      { t: "out", l: "实例", s: ["c", GREEN] }, { t: "in", gap: 1, l: "点", s: ["c", GREEN] }, { t: "in", l: "选中项", s: ["h", BOOL] },
      { t: "in", l: "实例", s: ["c", GREEN] }, { t: "check", l: "选择实例", s: ["h", BOOL] }, { t: "in", l: "实例编号", s: ["d", INT] },
      { t: "in", l: "旋转", s: ["d", ROT] }, { t: "in", l: "缩放:", s: ["h", VEC] }, { t: "vec", v: [["X", "1.000"], ["Y", "1.000"], ["Z", "1.000"]] }],
  },
  join: { h: "geo", title: "合并几何", rows: [{ t: "out", l: "几何数据", s: ["c", GREEN] }, { t: "in", gap: 1, l: "几何数据", s: ["p", GREEN] }] },
  hig: {
    h: "group", title: "HIG_几何查看器", rows: [
      { t: "out", l: "几何数据", s: ["c", GREEN] }, { t: "in", l: "几何数据", s: ["c", GREEN] },
      { t: "field", l: "点/边/面/面拐", v: "0", s: ["c", INT] }, { t: "field", l: "缩放", v: "0.500", s: ["h", FLT] }, { t: "field", l: "偏移量", v: "0.005", s: ["h", FLT] },
      { t: "check", on: 1, l: "编号", s: ["c", BOOL] }, { t: "check", on: 1, l: "法向", s: ["c", BOOL] }, { t: "check", l: "曲线切向", s: ["c", BOOL] },
      { t: "check", l: "自定义矢量", s: ["c", BOOL] }, { t: "in", l: "自定义矢量:", s: ["h", VEC] },
      { t: "vec", v: [["", "0.000"], ["", "0.000"], ["", "1.000"]] }, { t: "check", on: 1, l: "显示原来的几何体", s: ["c", BOOL] }],
  },
  alignZ: {
    h: "util", title: "对齐旋转至矢量", rows: [
      { t: "out", l: "旋转", s: ["d", ROT] }, { t: "tabs", v: "Z" }, { t: "pivot", l: "轴心", v: "自动" },
      { t: "in", l: "旋转", s: ["h", ROT] }, { t: "field", blue: 1, l: "系数", v: "1.000", s: ["h", FLT] }, { t: "in", l: "矢量", s: ["d", VEC] }],
  },
  alignX: {
    h: "util", title: "对齐旋转至矢量", rows: [
      { t: "out", l: "旋转", s: ["d", ROT] }, { t: "tabs", v: "X" }, { t: "pivot", l: "轴心", v: "自动" },
      { t: "in", l: "旋转", s: ["d", ROT] }, { t: "field", blue: 1, l: "系数", v: "1.000", s: ["h", FLT] }, { t: "in", l: "矢量", s: ["d", VEC] }],
  },
};

function Node({ def, x, y, selected }) {
  return (
    <div
      className={"absolute flex w-[109.200px] flex-col rounded-[3px] bg-[#1a2333] pb-[3px] text-[8.600px] leading-none whitespace-nowrap text-[#d3d7dc] shadow-[0_1px_5px_1px_rgba(0,0,0,0.550)] " + (selected ? "outline outline-[#3566a8]" : "")}
      style={{ left: x, top: y }}
    >
      <div className={"flex h-[16.500px] shrink-0 items-center rounded-t-[3px] pl-[8px] " + HEADS[def.h]}>
        <Chev className="mr-[3px] size-[9px]" sw={1.700} />
        <span>{def.title}</span>
        {def.h === "group" && <span className="mr-[3px] ml-auto flex items-end text-[7px]"><NodeTree className="size-[12px]" />2</span>}
      </div>
      <div className="flex flex-col pt-[2.300px]">{def.rows.map((r, i) => <Row key={i} r={r} />)}</div>
    </div>
  );
}

const LEFT = {
  ox: 18, oy: 578,
  nodes: [["input", 84.800, 652], ["curve", 370, 720], ["cube", 371, 868.600], ["inst", 697.500, 701.600], ["join", 838, 630], ["hig", 1013.700, 615], ["output", 1187, 617]],
  links: [
    [194, 678.800, 838, 676.500, GREEN, 2.100], [194, 678.800, 370, 837, GREEN, 1.900], [479, 747.600, 697.500, 748, GREEN, 1.900],
    [479, 798.600, 697.500, 833, "#75509a", 1.200], [480, 895.600, 697.500, 782, GREEN, 1.900], [806.700, 728.600, 838, 676, GREEN, 1.700],
    [947, 657.300, 1013.700, 659.200, GREEN, 2.100], [1123, 642.200, 1187, 644.500, GREEN, 2.100],
  ],
};
const RIGHT = {
  ox: 1387, oy: 577,
  nodes: [["input", 1500, 646], ["curve", 1700, 716.700], ["cube", 1696.300, 864.700, 1], ["alignZ", 1834.800, 865], ["alignX", 1977, 808.500], ["inst", 2113.800, 696], ["join", 2255, 624.500], ["hig", 2430.800, 609.300], ["output", 2604.300, 612]],
  links: [
    [1609, 673.300, 2255, 672, GREEN, 2.100], [1609, 673.300, 1700, 834, GREEN, 1.900], [1809, 743.800, 2113.800, 742.600, GREEN, 1.900],
    [1809, 760.800, 1977, 927.400, "#504c9e", 1.200], [1809, 777.900, 1834.500, 984, "#504c9e", 1.200], [1805.500, 892, 2113.800, 776.700, "#9c887e", 1.700],
    [1944, 892, 1977, 893.600, "#8f5aa8", 1.300], [2086, 835.500, 2113.800, 827.800, "#8f5aa8", 1.300], [2223, 723, 2255, 670.500, GREEN, 1.700],
    [2364, 651.700, 2431, 653.400, GREEN, 2.100], [2540, 636.500, 2604, 639, GREEN, 2.100],
  ],
};

function NodeEditor({ graph }) {
  const { ox, oy, nodes, links } = graph;
  return (
    <div className="flex min-h-0 flex-1 flex-col text-[12px] text-[#d8dbde]">
      <div className="flex h-[28px] shrink-0 items-center rounded-t-[4px] bg-[#16232e] pt-[2px] pr-[9px] pl-[8px]">
        <Btn w="w-[33px] gap-[2px]"><Particles /><Chev /></Btn>
        <Btn w="ml-[7px] w-[72px] pr-[2px] pl-[8px]" j="justify-between"><span>修改器</span><Chev /></Btn>
        <div className="ml-[14px] flex gap-[16px]">{["视图", "选择", "添加", "节点"].map((t) => <span key={t}>{t}</span>)}</div>
        <div className="ml-[282px] flex items-center">
          <Btn w="w-[33px] gap-[2px]"><NodeTree /><Chev /></Btn>
          <Btn w="w-[86px] pl-[9px]" c="bg-[#0b1016]" j="justify-start"><span>几何节点</span></Btn>
          <Shield className="ml-[3px] size-[16px] text-[#8b949b]" strokeWidth={1.500} />
          <Btn w="ml-[4px] w-[21px]"><Files className="size-[16px]" strokeWidth={2} /></Btn>
          <Btn w="w-[21px]"><X className="size-[14px]" strokeWidth={2} /></Btn>
          <Pin className="ml-[9px] size-[16px] rotate-45 text-[#8b949b]" strokeWidth={1.500} />
        </div>
        <div className="ml-auto flex items-center">
          <Btn w="w-[20px] text-[#3f4b55]" c="bg-[#121b24]"><UpArrow /></Btn>
          <Magnet className="ml-[8px] size-[16px] text-[#8b949b]" strokeWidth={1.800} />
          <Btn w="ml-[3px] w-[34px] gap-[3px]"><SnapGrid /><Chev /></Btn>
          <Btn w="ml-[8px] w-[20px] text-white" c="bg-[#22406b]"><OverlayIcon /></Btn>
          <Btn w="w-[21px]"><Chev /></Btn>
          <span className="ml-[21px]"><FilterIcon /></span>
          <Btn w="ml-[11px] w-[19px]" c="bg-[#0a0d11] text-[#f2f3f4]"><FaGear className="size-[15px]" /></Btn>
        </div>
      </div>
      <div className="relative flex-1 bg-[#111921]">
        <div className="flex h-[34px] items-center pt-[14px]">
          <ChevRight className="-ml-[2px] size-[9px] text-[#a5a8ab]" />
          <span className="ml-[12px]"><ObjectMode /></span>
          <span className="ml-[9px] w-[32px]">Spiral</span>
          <ChevRight className="ml-[16px] size-[11px]" />
          <span className="ml-[8px]"><Particles /></span>
          <span className="ml-[9px]">几何节点</span>
          <ChevRight className="ml-[15px] size-[11px]" />
          <span className="ml-[8px]"><NodeTree /></span>
          <span className="ml-[10px]">几何节点</span>
        </div>
        <svg className="absolute inset-0 size-full overflow-visible">
          {links.map(([x1, y1, x2, y2, c, w], i) => {
            const h = Math.min((x2 - x1) * 0.45, 90);
            return <path key={i} d={`M${x1 - ox} ${y1 - oy}C${x1 - ox + h} ${y1 - oy} ${x2 - ox - h} ${y2 - oy} ${x2 - ox} ${y2 - oy}`} fill="none" stroke={c} strokeWidth={w} />;
          })}
        </svg>
        {nodes.map(([k, x, y, sel], i) => <Node key={i} def={D[k]} x={x - ox} y={y - oy} selected={sel} />)}
        <div className="absolute bottom-[3px] left-[9px] h-[3px] w-[706px] rounded-full bg-[#1c2631]" />
        <div className="absolute top-[12px] right-[2px] h-[332px] w-[3px] rounded-full bg-[#1a232d]" />
        <div className="absolute top-[19px] right-[-2px] text-[#a8abae]"><ChevLeft className="size-[9px]" /></div>
      </div>
    </div>
  );
}

function Shot({ graph, className, gap }) {
  return (
    <div className={"relative flex h-[1066px] shrink-0 flex-col overflow-hidden rounded-[8px] border-2 border-[#7c7c7c] bg-[#0b0f14] pb-[3px] " + className}>
      <Viewport />
      <div className={"shrink-0 " + gap} />
      <NodeEditor graph={graph} />
    </div>
  );
}

function Caption({ children, className }) {
  return (
    <div className={"h-[99px] shrink-0 rounded-[9px] border-[2.500px] border-[#7c7c7c] bg-[#1e1e1e] pt-[22.500px] pl-[29px] text-[19px] leading-[28.800px] text-[#dadada] " + className}>
      {children}
    </div>
  );
}

export default function App() {
  return (
    <div className="relative flex h-[1195px] w-[2763px] flex-col overflow-hidden bg-[#1e1e1e] bg-[radial-gradient(circle,#343434_0.900px,transparent_1.300px)] bg-[length:23.810px_23.810px] bg-[position:11.300px_0.950px] font-['Inter','Noto_Sans_CJK_SC',sans-serif]">
      <div className="flex h-[12px] shrink-0 items-end bg-[#1e1e1e] pl-[9px] text-[18.400px] leading-none text-[#666]">
        <span className="mb-[5px] w-[1370px]">Pasted image 20240522174526.png</span>
        <span className="mb-[5px]">Pasted image 20240522172249.png</span>
      </div>
      <div className="flex shrink-0 gap-px pl-[9px]">
        <Shot graph={LEFT} className="w-[1369px] pt-[2px] pr-px pl-[7px]" gap="h-[3px]" />
        <Shot graph={RIGHT} className="w-[1373px] pr-[5px] pl-[6px]" gap="h-[4px]" />
      </div>
      <div className="flex">
        <Caption className="ml-[522.500px] w-[344px]">可以看到，此时的长方体的顶面<br />跟曲线的法向是对齐的</Caption>
        <Caption className="ml-[953px] w-[490px]">可以看到，通过节点输出的切向和法向的结合可<br />以输出等同旋转接口输出的目的</Caption>
      </div>
      <div className="absolute top-[1px] left-[682px] size-[23px] rounded-full border-2 border-[#2b2738] bg-[#8a5cf5]" />
    </div>
  );
}
